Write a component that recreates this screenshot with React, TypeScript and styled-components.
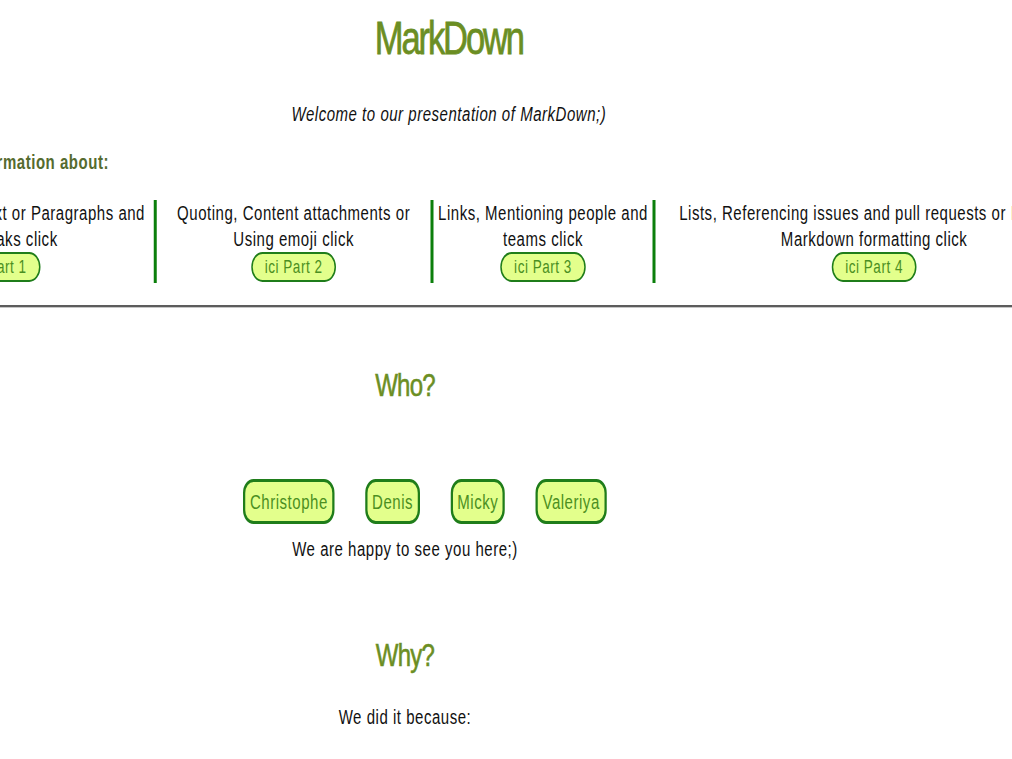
import React from "react";
import styled, { createGlobalStyle } from "styled-components";

const Global = createGlobalStyle`
  html, body {
    margin: 0;
    padding: 0;
    overflow: hidden;
    background: #ffffff;
  }
  body {
    font-family: "Liberation Sans", Arial, sans-serif;
    color: #111111;
  }
`;

const Stage = styled.div`
  width: 1350px;
  transform: scaleX(0.75);
  transform-origin: 0 0;
  font-size: 20px;
  line-height: 26px;
  letter-spacing: 0.7px;
`;

const Header = styled.header`
  width: 1197px;
  padding-top: 11px;
  text-align: center;
`;

const Title = styled.h1`
  margin: 0;
  font-size: 46px;
  line-height: 54px;
  font-weight: 400;
  letter-spacing: -2.8px;
  color: #6b8e23;
  -webkit-text-stroke: 0.8px #6b8e23;
`;

const Welcome = styled.p`
  margin: 36px 0 0;
  font-style: italic;
`;

const InfoTitle = styled.h3`
  margin: 22px 0 0 -44px;
  font-size: 20px;
  line-height: 26px;
  font-weight: 700;
  color: #556b2f;
`;

const Columns = styled.div`
  display: flex;
  margin: 25px 0 0 -211px;
`;

const Column = styled.div<{ $w: number; $first?: boolean }>`
  flex: 0 0 ${(p) => p.$w}px;
  box-sizing: border-box;
  height: 83px;
  display: flex;
  flex-direction: column;
  align-items: center;
  text-align: center;
  border-left: ${(p) => (p.$first ? "none" : "4px solid #0b7f0b")};
`;

const Line = styled.span`
  display: block;
  white-space: nowrap;
`;

const PartButton = styled.button`
  box-sizing: border-box;
  height: 30px;
  padding: 0 16px;
  border: 2px solid #1f7d1a;
  border-radius: 15px;
  background: #e3ff8c;
  color: #4b8f22;
  font-family: inherit;
  font-size: 18px;
  line-height: 26px;
  letter-spacing: 0.7px;
  cursor: pointer;
`;

const Rule = styled.hr`
  margin: 22px 0 0;
  height: 0;
  border: 0;
  border-top: 2px solid #5c5c5c;
  border-bottom: 1px solid #c6c6c6;
`;

const Section = styled.section`
  width: 1080px;
  text-align: center;
`;

const SectionTitle = styled.h2<{ $mt: number }>`
  margin: ${(p) => p.$mt}px 0 0;
  font-size: 32px;
  line-height: 40px;
  font-weight: 400;
  letter-spacing: -1px;
  color: #6b8e23;
  -webkit-text-stroke: 0.6px #6b8e23;
`;

const Names = styled.div`
  display: flex;
  justify-content: center;
  margin-top: 74px;
  padding-left: 12px;
`;

const NameButton = styled.button`
  box-sizing: border-box;
  height: 45px;
  margin-left: 41px;
  padding: 0 6px;
  border: 3px solid #1f7d1a;
  border-radius: 14px;
  background: #e3ff8c;
  color: #4b8f22;
  font-family: inherit;
  font-size: 20px;
  line-height: 26px;
  letter-spacing: 0.7px;
  cursor: pointer;
`;

const Text = styled.p<{ $mt: number }>`
  margin: ${(p) => p.$mt}px 0 0;
`;

const columns = [
  { w: 416, lines: ["Headings, Styling text or Paragraphs and", "Line breaks click"], part: 1 },
  { w: 369, lines: ["Quoting, Content attachments or", "Using emoji click"], part: 2 },
  { w: 296, lines: ["Links, Mentioning people and", "teams click"], part: 3 },
  {
    w: 587,
    lines: ["Lists, Referencing issues and pull requests or Ignoring", "Markdown formatting click"],
    part: 4,
  },
];

const names = ["Christophe", "Denis", "Micky", "Valeriya"];

export default function App() {
  return (
    <>
      <Global />
      <Stage>
        <Header>
          <Title>MarkDown</Title>
          <Welcome>Welcome to our presentation of MarkDown;)</Welcome>
        </Header>
        <InfoTitle>Information about:</InfoTitle>
        <Columns>
          {columns.map((c, i) => (
            <Column key={c.part} $w={c.w} $first={i === 0}>
              {c.lines.map((l) => (
                <Line key={l}>{l}</Line>
              ))}
              <PartButton>ici Part {c.part}</PartButton>
            </Column>
          ))}
        </Columns>
        <Rule />
        <Section>
          <SectionTitle $mt={57}>Who?</SectionTitle>
          <Names>
            {names.map((n) => (
              <NameButton key={n}>{n}</NameButton>
            ))}
          </Names>
          <Text $mt={12}>We are happy to see you here;)</Text>
          <SectionTitle $mt={73}>Why?</SectionTitle>
          <Text $mt={29}>We did it because:</Text>
        </Section>
      </Stage>
    </>
  );
}
